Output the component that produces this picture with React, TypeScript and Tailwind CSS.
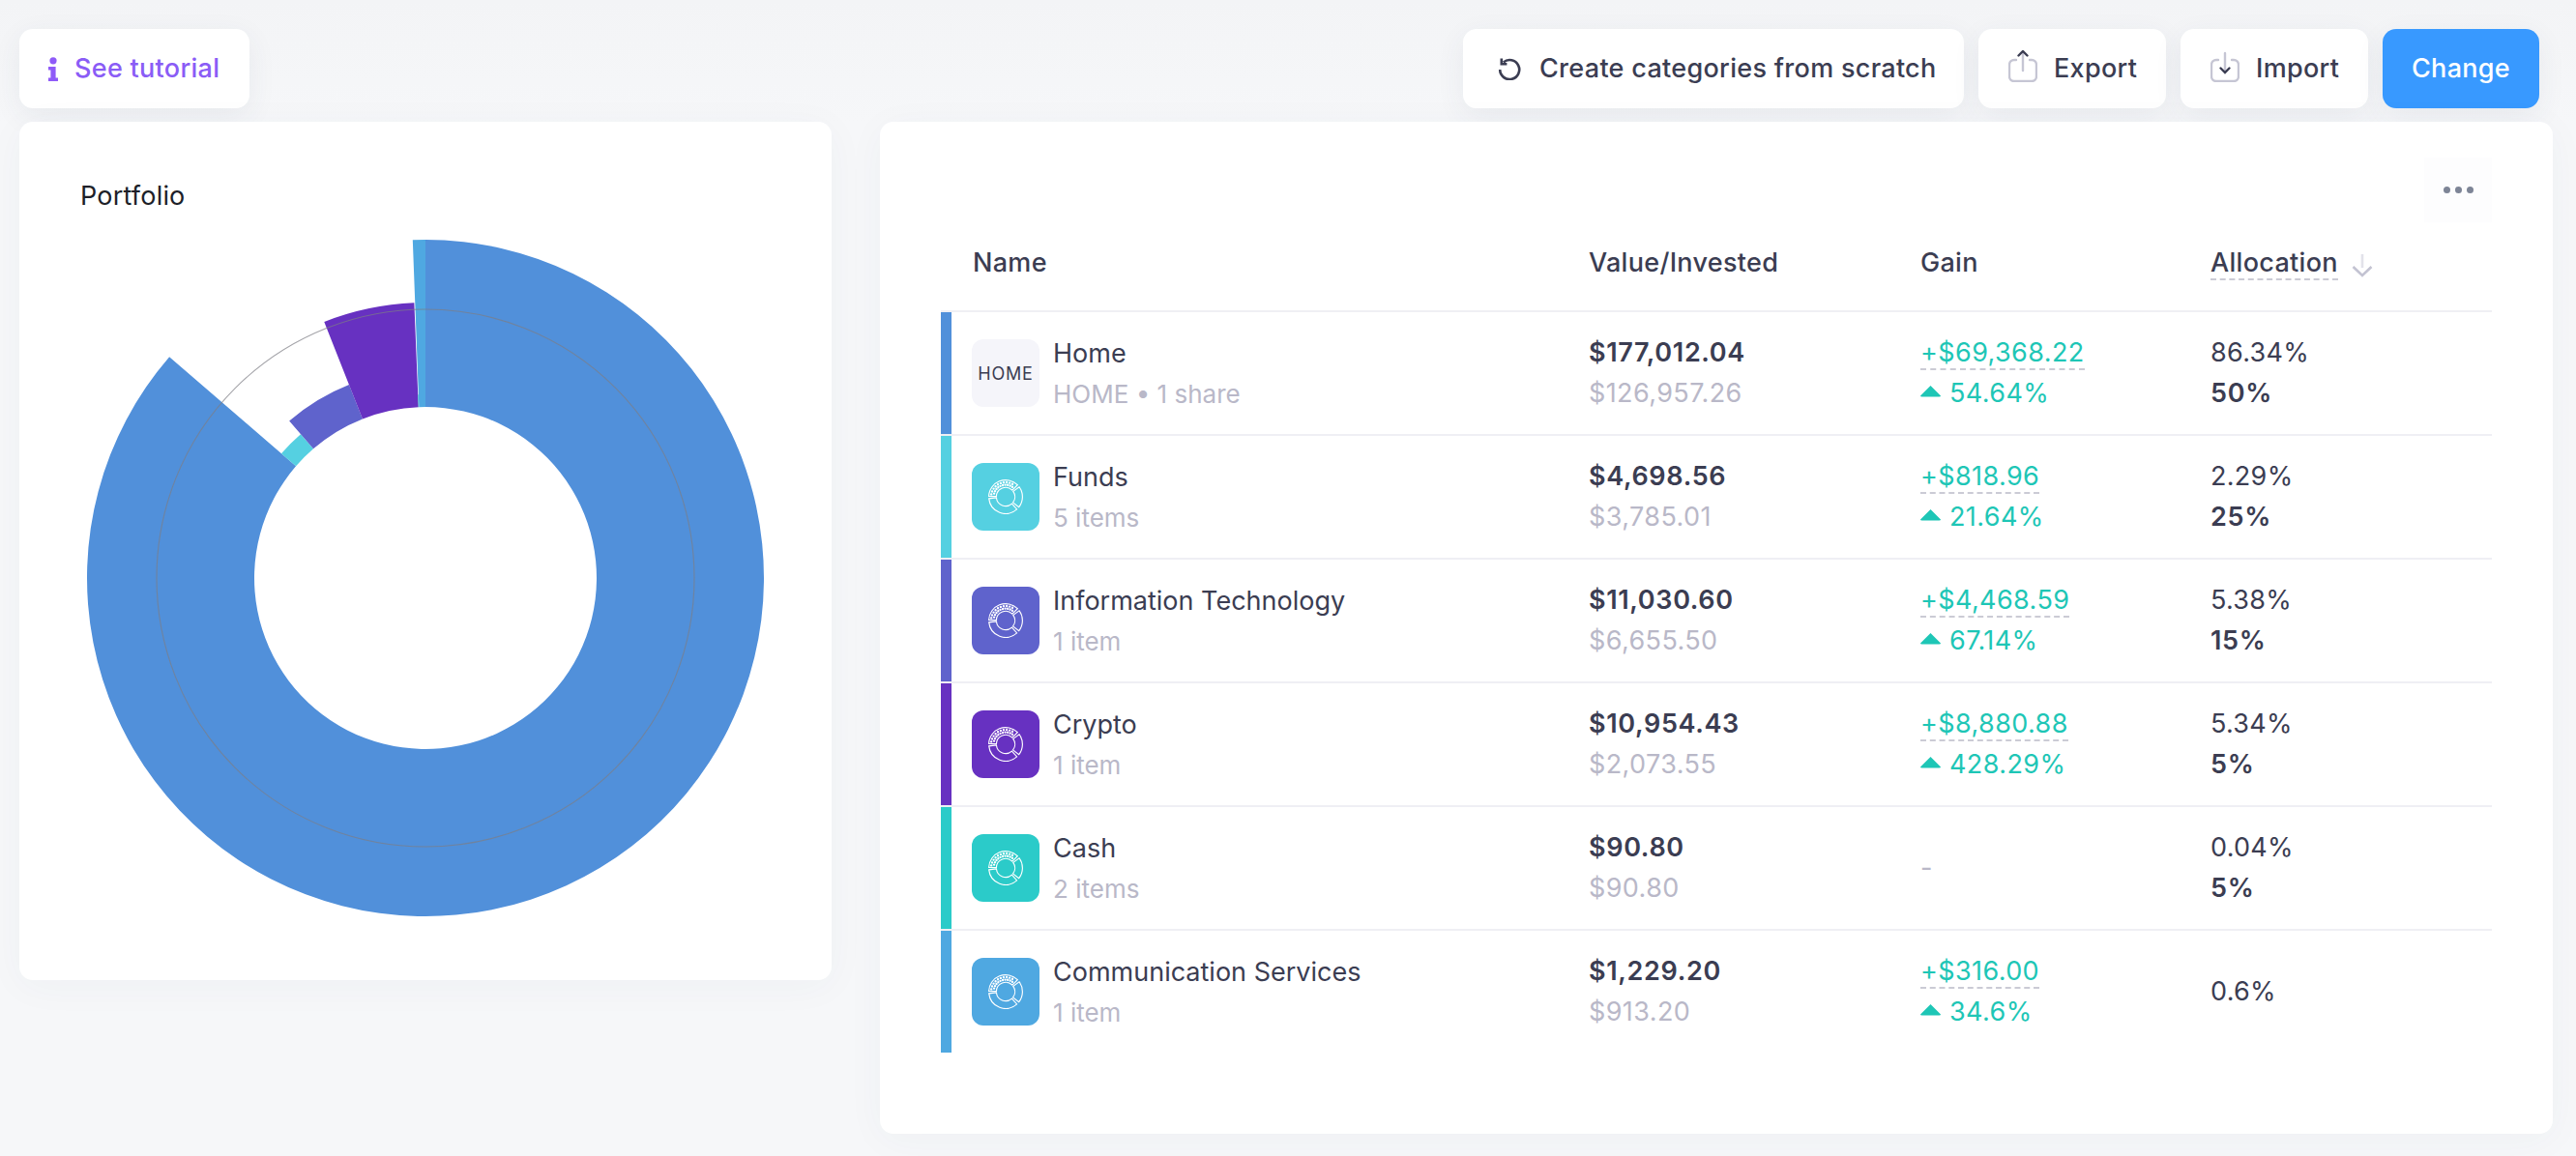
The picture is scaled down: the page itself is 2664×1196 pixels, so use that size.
import React from "react";

const CX = 360;
const CY = 360;

function pt(r: number, deg: number, cx = CX, cy = CY): string {
  const a = ((deg - 90) * Math.PI) / 180;
  return `${(cx + r * Math.cos(a)).toFixed(2)} ${(cy + r * Math.sin(a)).toFixed(2)}`;
}

function sector(r0: number, r1: number, a0: number, a1: number, cx = CX, cy = CY): string {
  const large = a1 - a0 > 180 ? 1 : 0;
  return `M${pt(r0, a0, cx, cy)} L${pt(r1, a0, cx, cy)} A${r1} ${r1} 0 ${large} 1 ${pt(r1, a1, cx, cy)} L${pt(r0, a1, cx, cy)} A${r0} ${r0} 0 ${large} 0 ${pt(r0, a0, cx, cy)} Z`;
}

const slices = [
  { r: 350, a0: 0, a1: 310.82, fill: "#5190da" },
  { r: 197, a0: 310.82, a1: 319.07, fill: "#55d0e1" },
  { r: 215, a0: 319.07, a1: 338.44, fill: "#5f63cc" },
  { r: 285, a0: 338.44, a1: 357.66, fill: "#6731c1" },
  { r: 190, a0: 357.66, a1: 357.84, fill: "#2bcbc9" },
  { r: 350, a0: 357.84, a1: 360, fill: "#4fa8e1" },
];

type Row = {
  name: string;
  sub: React.ReactNode;
  value: string;
  invested: string;
  gain?: string;
  pct?: string;
  alloc: string;
  target?: string;
  bar: string;
  icon: string;
  home?: boolean;
};

const rows: Row[] = [
  { name: "Home", sub: "HOME • 1 share", value: "$177,012.04", invested: "$126,957.26", gain: "+$69,368.22", pct: "54.64%", alloc: "86.34%", target: "50%", bar: "bg-[#5190da]", icon: "bg-[#f5f5fa]", home: true },
  { name: "Funds", sub: "5 items", value: "$4,698.56", invested: "$3,785.01", gain: "+$818.96", pct: "21.64%", alloc: "2.29%", target: "25%", bar: "bg-[#55d0e1]", icon: "bg-[#55d0e1]" },
  { name: "Information Technology", sub: "1 item", value: "$11,030.60", invested: "$6,655.50", gain: "+$4,468.59", pct: "67.14%", alloc: "5.38%", target: "15%", bar: "bg-[#5f63cc]", icon: "bg-[#5f63cc]" },
  { name: "Crypto", sub: "1 item", value: "$10,954.43", invested: "$2,073.55", gain: "+$8,880.88", pct: "428.29%", alloc: "5.34%", target: "5%", bar: "bg-[#6731c1]", icon: "bg-[#6731c1]" },
  { name: "Cash", sub: "2 items", value: "$90.80", invested: "$90.80", alloc: "0.04%", target: "5%", bar: "bg-[#2bcbc9]", icon: "bg-[#2bcbc9]" },
  { name: "Communication Services", sub: "1 item", value: "$1,229.20", invested: "$913.20", gain: "+$316.00", pct: "34.6%", alloc: "0.6%", bar: "bg-[#4fa8e1]", icon: "bg-[#4fa8e1]" },
];

function PieGlyph() {
  const dots: React.ReactNode[] = [];
  for (let a = -80; a <= 36; a += 12) {
    for (const r of [12.4, 15]) {
      const [x, y] = pt(r, a + (r === 12.4 ? 6 : 0), 18, 18).split(" ");
      dots.push(<circle key={`${a}-${r}`} cx={x} cy={y} r="0.6" fill="#fff" />);
    }
  }
  return (
    <svg width="36" height="36" viewBox="0 0 36 36" fill="none" stroke="#fff" strokeWidth="1.15">
      <path d={sector(9.6, 17.4, 272, 405, 18, 18)} />
      <path d={sector(9.6, 17.4, 54, 128, 18, 18)} />
      <path d={sector(9.6, 17.4, 138, 264, 18, 18)} />
      {dots}
    </svg>
  );
}

function ReloadIcon() {
  return (
    <svg width="24" height="24" viewBox="0 0 24 24" fill="none" stroke="#3b3d52" strokeWidth="2.6" className="shrink-0">
      <path d="M2.2 13a10 10 0 1 0 3.6-7.6" />
      <path d="M3.8 1.6v5.6h5.6" strokeWidth="2.6" />
    </svg>
  );
}

function ExportIcon() {
  return (
    <svg width="30" height="33" viewBox="0 0 30 33" fill="none" strokeWidth="2.4" strokeLinecap="round" className="shrink-0 mb-[5px]">
      <path d="M8 10H6a5 5 0 0 0-5 5v12a5 5 0 0 0 5 5h18a5 5 0 0 0 5-5V15a5 5 0 0 0-5-5h-2" stroke="#c6c6d4" />
      <path d="M15 3v18" stroke="#c6c6d4" />
      <path d="M10.5 5.5 15 1l4.5 4.5" stroke="#3b3d52" />
    </svg>
  );
}

function ImportIcon() {
  return (
    <svg width="30" height="33" viewBox="0 0 30 33" fill="none" strokeWidth="2.4" strokeLinecap="round" className="shrink-0 mb-[5px]">
      <path d="M8 10H6a5 5 0 0 0-5 5v12a5 5 0 0 0 5 5h18a5 5 0 0 0 5-5V15a5 5 0 0 0-5-5h-2" stroke="#c6c6d4" />
      <path d="M15 3v18" stroke="#c6c6d4" />
      <path d="M10.5 18.5 15 23l4.5-4.5" stroke="#3b3d52" />
    </svg>
  );
}

function InfoIcon() {
  return (
    <svg width="10" height="25" viewBox="0 0 10 25" fill="#8f5bf8" className="shrink-0">
      <circle cx="5" cy="3.8" r="3.6" />
      <path d="M0 10h7.6v11.6H10V25H0v-3.4h2.4v-8.2H0z" />
    </svg>
  );
}

function SortIcon() {
  return (
    <svg width="22" height="24" viewBox="0 0 22 24" fill="none" strokeWidth="2.6" className="shrink-0">
      <path d="M11 0v14" stroke="#e2e2ea" />
      <path d="M1.5 13 11 22l9.5-9" stroke="#c3c3d2" />
    </svg>
  );
}

function Dashed({ children, tone }: { children: React.ReactNode; tone: string }) {
  return <span className={`inline-block leading-[32px] border-b-2 border-dashed border-[#cbcbd5] ${tone}`}>{children}</span>;
}

const buttonBase =
  "h-[82px] rounded-[14px] flex items-center text-[27px] tracking-[0.3px] font-medium shadow-[0_8px_30px_rgba(60,70,100,0.07)]";

export default function App() {
  return (
    <div className="w-[2664px] h-[1196px] overflow-hidden bg-[#f6f7f9] font-['Inter',sans-serif] text-[#3b3d52]">
      <div className="flex justify-between h-[126px] pt-[30px] pl-[20px] pr-[38px] bg-gradient-to-b from-[#f3f4f6] to-[#f6f7f9]">
        <button className={`${buttonBase} w-[238px] pl-[30px] gap-[17px] bg-white text-[#8a5cf6]`}>
          <InfoIcon />
          <span>See tutorial</span>
        </button>
        <div className="flex gap-[15px]">
          <button className={`${buttonBase} w-[518px] pl-[36px] gap-[19px] bg-white`}>
            <ReloadIcon />
            <span>Create categories from scratch</span>
          </button>
          <button className={`${buttonBase} w-[194px] pl-[31px] gap-[17px] bg-white`}>
            <ExportIcon />
            <span>Export</span>
          </button>
          <button className={`${buttonBase} w-[194px] pl-[31px] gap-[17px] bg-white`}>
            <ImportIcon />
            <span>Import</span>
          </button>
          <button className={`${buttonBase} w-[162px] justify-center bg-[#3899ff] text-white`}>Change</button>
        </div>
      </div>

      <div className="flex items-start pl-[20px] gap-[50px]">
        <section className="w-[840px] h-[888px] rounded-[14px] bg-white pt-[57px] shadow-[0_6px_40px_rgba(60,70,100,0.04)]">
          <h2 className="ml-[63px] text-[27px] tracking-[0.2px] leading-[40px] font-normal text-[#1d1f29]">Portfolio</h2>
          <svg width="720" height="720" viewBox="0 0 720 720" className="ml-[60px] mt-[15px] block">
            {slices.map((s) => (
              <path key={s.a0} d={sector(177, s.r, s.a0, s.a1)} fill={s.fill} />
            ))}
            <circle cx={CX} cy={CY} r="278" fill="none" stroke="#7d7d85" strokeOpacity="0.7" strokeWidth="1.1" />
          </svg>
        </section>

        <section className="w-[1730px] h-[1047px] rounded-[14px] bg-white pt-[37px] pl-[63px] pr-[63px] shadow-[0_6px_40px_rgba(60,70,100,0.04)]">
          <div className="flex justify-end">
            <button className="w-[70px] h-[67px] bg-[#fdfdfe] flex items-center justify-center gap-[5px]">
              <span className="w-[7px] h-[7px] rounded-full bg-[#7d8496]" />
              <span className="w-[7px] h-[7px] rounded-full bg-[#7d8496]" />
              <span className="w-[7px] h-[7px] rounded-full bg-[#7d8496]" />
            </button>
          </div>

          <div className="grid grid-cols-[670px_343px_300px_1fr] h-[91px] text-[27px] tracking-[0.3px] font-medium">
            <div className="pl-[33px] pt-[21px] leading-[42px]">Name</div>
            <div className="pt-[21px] leading-[42px]">Value/Invested</div>
            <div className="pt-[21px] leading-[42px]">Gain</div>
            <div className="pt-[26px] flex items-start gap-[14px]">
              <Dashed tone="">Allocation</Dashed>
              <span className="pt-[7px]">
                <SortIcon />
              </span>
            </div>
          </div>

          {rows.map((row) => (
            <div key={row.name} className="grid grid-cols-[670px_343px_300px_1fr] h-[128px] border-t-2 border-[#efeff4] text-[27px]">
              <div className="flex items-center">
                <div className={`w-[11px] h-full ${row.bar}`} />
                <div className={`w-[70px] h-[70px] ml-[21px] rounded-[12px] flex items-center justify-center ${row.icon}`}>
                  {row.home ? (
                    <span className="text-[18px] font-normal tracking-[0.8px]">HOME</span>
                  ) : (
                    <PieGlyph />
                  )}
                </div>
                <div className="ml-[14px] pt-[2px] leading-[42px]">
                  <div>{row.name}</div>
                  <div className="text-[26px] text-[#b9b8c8]">{row.sub}</div>
                </div>
              </div>

              <div className="flex flex-col justify-center leading-[42px]">
                <div className="font-semibold tracking-[0.65px]">{row.value}</div>
                <div className="tracking-[0.4px] text-[#b9b8c8]">{row.invested}</div>
              </div>

              <div className="flex flex-col justify-center tracking-[0.4px]">
                {row.gain ? (
                  <>
                    <div className="h-[42px] pt-[5px] flex items-start">
                      <Dashed tone="text-[#1ec6b6]">{row.gain}</Dashed>
                    </div>
                    <div className="h-[42px] flex items-center gap-[9px] leading-[42px] text-[#1ec6b6]">
                      <svg width="21" height="12" viewBox="0 0 21 12" fill="#1ec6b6" className="shrink-0 mb-[5px]">
                        <path d="M10.5 0 21 10.5q0 1-1.5 1h-18Q0 11.5 0 10.5z" />
                      </svg>
                      <span>{row.pct}</span>
                    </div>
                  </>
                ) : (
                  <div className="text-[#b9b8c8] leading-[42px]">-</div>
                )}
              </div>

              <div className="flex flex-col justify-center leading-[42px]">
                <div className="tracking-[0.3px]">{row.alloc}</div>
                {row.target && <div className="font-semibold tracking-[0.7px]">{row.target}</div>}
              </div>
            </div>
          ))}
        </section>
      </div>
    </div>
  );
}
